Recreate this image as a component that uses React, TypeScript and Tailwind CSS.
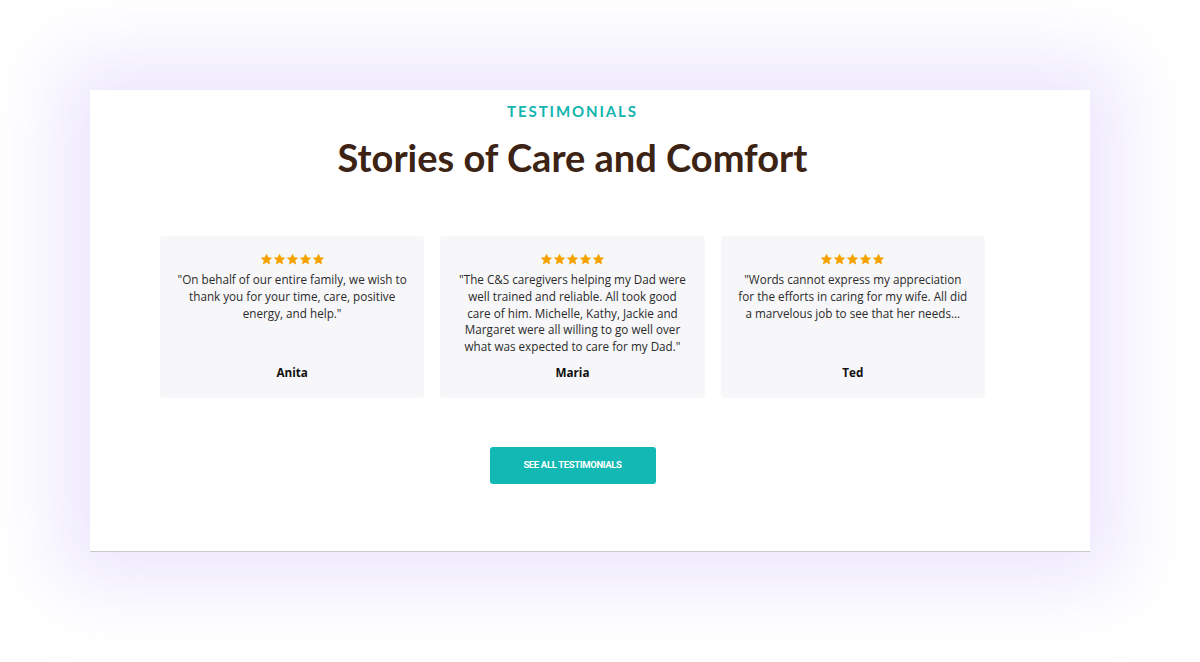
import React from "react";

const Star = () => (
  <svg width="13" height="13" viewBox="0 0 24 24" className="shrink-0">
    <path
      d="M12 1.2l3.2 6.8 7.4.9-5.5 5.1 1.5 7.3L12 17.7l-6.6 3.6 1.5-7.3-5.5-5.1 7.4-.9z"
      fill="#f5a300"
    />
  </svg>
);

const cards = [
  {
    text: '"On behalf of our entire family, we wish to thank you for your time, care, positive energy, and help."',
    name: "Anita",
  },
  {
    text: '"The C&S caregivers helping my Dad were well trained and reliable. All took good care of him. Michelle, Kathy, Jackie and Margaret were all willing to go well over what was expected to care for my Dad."',
    name: "Maria",
  },
  {
    text: '"Words cannot express my appreciation for the efforts in caring for my wife. All did a marvelous job to see that her needs...',
    name: "Ted",
  },
];

export default function App() {
  return (
    <div className="w-[1200px] h-[662px] bg-white overflow-hidden pt-[90px] pl-[90px]">
      <div className="w-[1000px] h-[462px] bg-white border-b border-[#cbc6cf] shadow-[0_0_70px_30px_rgba(200,184,250,0.35)]">
        <div className="w-[825px] ml-[70px] flex flex-col items-center">
          <div
            className="mt-[12px] text-[15px] leading-[18px] font-bold tracking-[1.9px] text-[#12b5b0]"
            style={{ fontFamily: "Lato, 'Noto Sans', sans-serif" }}
          >
            TESTIMONIALS
          </div>
          <h1
            className="mt-[15px] text-[38px] leading-[44px] font-bold text-[#3c2314]"
            style={{ fontFamily: "Lato, 'Noto Sans', sans-serif" }}
          >
            Stories of Care and Comfort
          </h1>
          <div className="mt-[57px] w-full grid grid-cols-3 gap-[16px]">
            {cards.map((c) => (
              <div
                key={c.name}
                className="h-[162px] bg-[#f7f7f9] rounded-[4px] flex flex-col items-center pt-[17px] pb-[18px] px-[16px]"
                style={{ fontFamily: "'Open Sans', sans-serif" }}
              >
                <div className="flex">
                  <Star />
                  <Star />
                  <Star />
                  <Star />
                  <Star />
                </div>
                <p className="mt-[5px] flex-1 text-center text-[11.7px] leading-[16.8px] text-[#2b2b2b]">
                  {c.text}
                </p>
                <div className="text-[11.7px] leading-[16px] font-bold text-[#111]">
                  {c.name}
                </div>
              </div>
            ))}
          </div>
          <button
            className="mt-[49px] w-[166px] h-[37px] rounded-[3px] bg-[#12b8b3] text-white text-[9.5px] font-bold tracking-[-0.35px]"
            style={{ fontFamily: "Roboto, sans-serif" }}
          >
            SEE ALL TESTIMONIALS
          </button>
        </div>
      </div>
    </div>
  );
}
